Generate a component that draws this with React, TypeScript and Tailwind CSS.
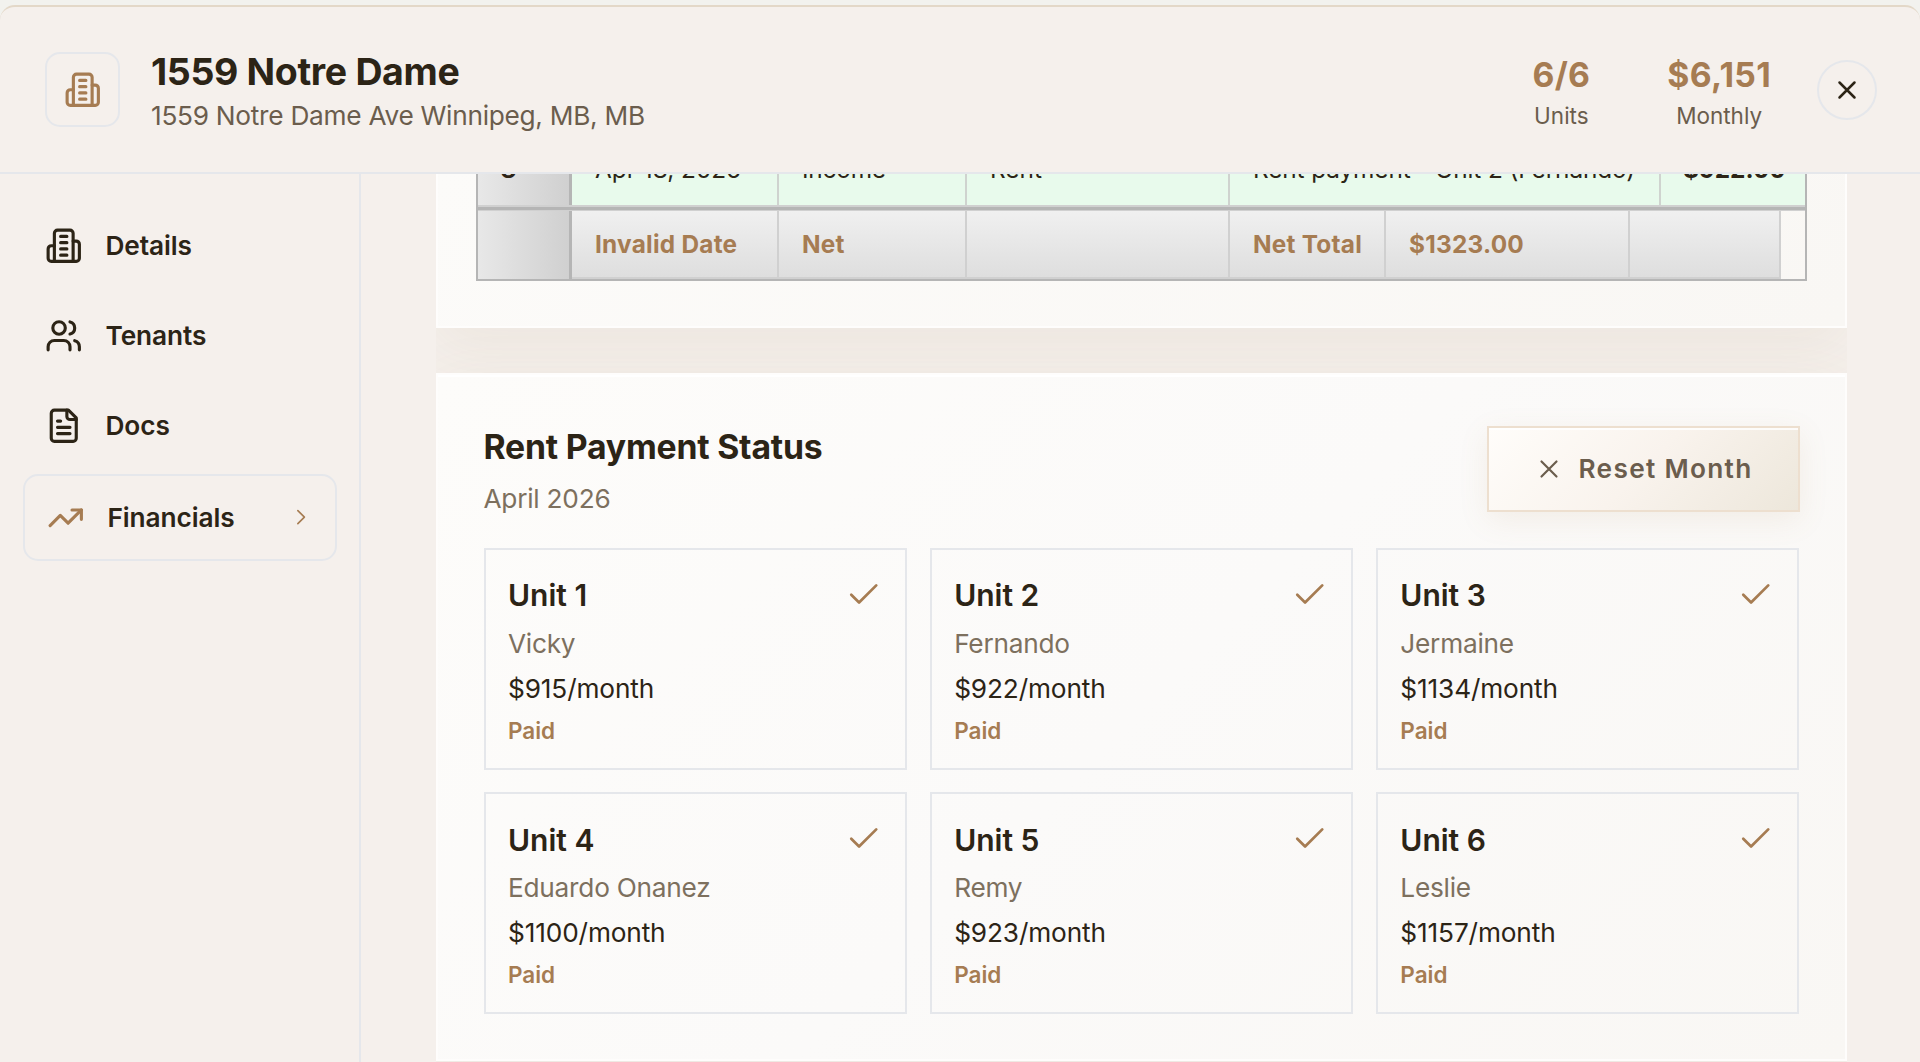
import type { ReactNode } from "react";

type IconProps = { size: string; stroke: number; children: ReactNode };

function Icon({ size, stroke, children }: IconProps) {
  return (
    <svg
      viewBox="0 0 24 24"
      fill="none"
      stroke="currentColor"
      strokeWidth={stroke}
      strokeLinecap="round"
      strokeLinejoin="round"
      className={`shrink-0 ${size}`}
    >
      {children}
    </svg>
  );
}

const building = (
  <>
    <path d="M6 22V4a2 2 0 0 1 2-2h8a2 2 0 0 1 2 2v18Z" />
    <path d="M6 12H4a2 2 0 0 0-2 2v6a2 2 0 0 0 2 2h2" />
    <path d="M18 9h2a2 2 0 0 1 2 2v9a2 2 0 0 1-2 2h-2" />
    <path d="M10 6h4M10 10h4M10 14h4M10 18h4" />
  </>
);
const users = (
  <>
    <path d="M16 21v-2a4 4 0 0 0-4-4H6a4 4 0 0 0-4 4v2" />
    <circle cx="9" cy="7" r="4" />
    <path d="M22 21v-2a4 4 0 0 0-3-3.87" />
    <path d="M16 3.13a4 4 0 0 1 0 7.75" />
  </>
);
const file = (
  <>
    <path d="M15 2H6a2 2 0 0 0-2 2v16a2 2 0 0 0 2 2h12a2 2 0 0 0 2-2V7Z" />
    <path d="M14 2v4a2 2 0 0 0 2 2h4" />
    <path d="M10 9H8M16 13H8M16 17H8" />
  </>
);
const trend = (
  <>
    <path d="M22 7 13.5 15.5 8.5 10.5 2 17" />
    <path d="M16 7h6v6" />
  </>
);
const cross = <path d="M18 6 6 18M6 6l12 12" />;
const check = <path d="M20 6 9 17l-5-5" />;
const chevron = <path d="m9 18 6-6-6-6" />;

function Header() {
  return (
    <header className="flex h-[169px] shrink-0 items-center rounded-t-[15px] border-t-2 border-b-2 border-t-[#e3d8c8] border-b-[#e5e7eb] bg-[#f5f0ec] pr-[43px] pl-[45px]">
      <div className="flex size-[75px] items-center justify-center rounded-[15px] border-2 border-[#e5e7eb] text-[#a67c52]">
        <Icon size="size-[37.5px]" stroke={2}>{building}</Icon>
      </div>
      <div className="ml-[31px] flex-1 pt-[5px]">
        <h1 className="text-[37.5px] leading-[47px] font-bold tracking-[-0.35px]">1559 Notre Dame</h1>
        <p className="text-[26.25px] leading-[41px] tracking-[-0.28px] text-[#6b5d4d]">1559 Notre Dame Ave Winnipeg, MB, MB</p>
      </div>
      <div className="flex gap-[77px] pt-px text-center">
        <Stat value="6/6" label="Units" />
        <Stat value="$6,151" label="Monthly" />
      </div>
      <button className="ml-[46px] flex size-[60px] items-center justify-center rounded-full border-2 border-[#e5e7eb]">
        <Icon size="size-[30px]" stroke={2}>{cross}</Icon>
      </button>
    </header>
  );
}

function Stat({ value, label }: { value: string; label: string }) {
  return (
    <div>
      <div className="text-[33.75px] leading-[52.5px] font-bold tracking-[0.3px] text-[#a67c52]">{value}</div>
      <div className="text-[22.5px] leading-[30px] text-[#6b5d4d]">{label}</div>
    </div>
  );
}

const navItems = [
  { label: "Details", icon: building },
  { label: "Tenants", icon: users },
  { label: "Docs", icon: file },
];

function Sidebar() {
  return (
    <nav className="flex w-[361px] shrink-0 flex-col gap-[7.5px] border-r-2 border-[#e5e7eb] px-[22.5px] pt-[30px] text-[26.25px] font-semibold tracking-[-0.1px]">
      {navItems.map((item) => (
        <div key={item.label} className="flex h-[82.5px] items-center gap-[23px] px-[22.5px]">
          <Icon size="size-[37.5px]" stroke={2}>{item.icon}</Icon>
          <span>{item.label}</span>
        </div>
      ))}
      <div className="flex h-[86.5px] items-center gap-[23px] rounded-[15px] border-2 border-[#e5e7eb] pr-[20.5px] pl-[22.5px]">
        <Icon size="size-[37.5px] text-[#a67c52]" stroke={2}>{trend}</Icon>
        <span className="flex-1">Financials</span>
        <Icon size="size-[26.25px] text-[#a67c52]" stroke={1.5}>{chevron}</Icon>
      </div>
    </nav>
  );
}

const entryCell = "shrink-0 border-r-2 border-[#cfd3cf] pl-[23px] whitespace-nowrap";
const netCell = "flex shrink-0 items-center border-r-2 border-[#d0d0d0] pl-[23px] whitespace-nowrap";

function Ledger() {
  return (
    <div className="mx-[40px] w-[1331px] border-x-2 border-b-2 border-[#b5b5b5] text-[24.375px]">
      <div className="flex h-[31px] overflow-hidden bg-[#e8faec] leading-[30px]">
        <div className="w-[94px] shrink-0 border-r-3 border-[#b5b5b5] bg-linear-to-r from-[#e8e8e8] to-[#d0d0d0]">
          <div className="-mt-[20px] pr-[30px] text-center font-bold">8</div>
        </div>
        <div className={`w-[207px] ${entryCell}`}><div className="-mt-[20px]">Apr 18, 2026</div></div>
        <div className={`w-[188px] ${entryCell}`}><div className="-mt-[20px] tracking-[-0.2px]">Income</div></div>
        <div className={`w-[263px] ${entryCell}`}><div className="-mt-[20px]">Rent</div></div>
        <div className={`w-[431px] ${entryCell}`}><div className="-mt-[20px] tracking-[-0.1px]">Rent payment - Unit 2 (Fernando)</div></div>
        <div className="flex-1 pl-[22px]"><div className="-mt-[20px] font-bold">$922.00</div></div>
      </div>
      <div className="h-[6px] border-t-2 border-b border-[#d0d0d0] bg-[#b5b5b5]" />
      <div className="flex h-[68px] font-bold tracking-[0.25px] text-[#a67c52]">
        <div className="w-[94px] shrink-0 border-r-3 border-[#b5b5b5] bg-linear-to-r from-[#e8e8e8] to-[#d0d0d0]" />
        <div className="flex w-[1209px] border-b-2 border-[#d0d0d0] bg-linear-to-b from-[#f0f0f0] to-[#dedede]">
          <div className={`w-[207px] ${netCell}`}>Invalid Date</div>
          <div className={`w-[188px] ${netCell}`}>Net</div>
          <div className={`w-[263px] ${netCell}`} />
          <div className={`w-[156px] ${netCell}`}>Net Total</div>
          <div className={`w-[244px] ${netCell}`}>$1323.00</div>
          <div className={`w-[151px] ${netCell}`} />
        </div>
      </div>
    </div>
  );
}

const units = [
  { name: "Unit 1", tenant: "Vicky", rent: "$915/month" },
  { name: "Unit 2", tenant: "Fernando", rent: "$922/month" },
  { name: "Unit 3", tenant: "Jermaine", rent: "$1134/month" },
  { name: "Unit 4", tenant: "Eduardo Onanez", rent: "$1100/month" },
  { name: "Unit 5", tenant: "Remy", rent: "$923/month" },
  { name: "Unit 6", tenant: "Leslie", rent: "$1157/month" },
];

function RentStatus() {
  return (
    <section className="mt-[45px] h-[688px] border-2 border-[#fefdfc] bg-linear-135 from-[#fdfcfa] via-[#fbfaf9] to-[#f9f7f4] px-[45.5px] pt-[45px] shadow-[0_15px_60px_rgba(139,110,60,0.08),inset_0_2px_0_#fff]">
      <div className="mb-[30px] flex items-center justify-between">
        <div>
          <h2 className="pt-px text-[33.75px] leading-[51.5px] font-bold tracking-[-0.2px]">Rent Payment Status</h2>
          <p className="mt-[7.5px] pt-px text-[26.25px] leading-[36.5px] tracking-[-0.25px] text-[#7d705e]">April 2026</p>
        </div>
        <button className="flex h-[86.5px] w-[313px] items-center gap-[15px] border-2 border-[#eddfcf] bg-linear-135 from-[#fffdfa] via-[#f9f3ed] to-[#ede7db] pl-[45px] text-[26.25px] font-semibold tracking-[1.3px] whitespace-nowrap text-[#6b5d4d] shadow-[0_8px_30px_rgba(166,124,82,0.1),inset_0_2px_0_rgba(255,255,255,0.8)]">
          <Icon size="size-[30px]" stroke={1.75}>{cross}</Icon>
          Reset Month
        </button>
      </div>
      <div className="grid grid-cols-3 gap-x-[22.5px] gap-y-[22.5px]">
        {units.map((unit) => (
          <div key={unit.name} className="flex h-[222px] flex-col gap-[7.5px] border-2 border-[#e5e7eb] p-[22.5px]">
            <div className="flex h-[45px] shrink-0 items-center justify-between">
              <span className="pt-[2px] text-[30px] font-semibold">{unit.name}</span>
              <Icon size="size-[37.5px] text-[#a67c52]" stroke={1.75}>{check}</Icon>
            </div>
            <div className="pt-px text-[26.25px] leading-[36.5px] tracking-[-0.25px] text-[#7d705e]">{unit.tenant}</div>
            <div className="pt-px text-[26.25px] leading-[36.5px] tracking-[-0.15px]">{unit.rent}</div>
            <div className="pt-px text-[22.5px] leading-[30px] font-semibold text-[#a67c52]">Paid</div>
          </div>
        ))}
      </div>
    </section>
  );
}

export default function App() {
  return (
    <div className="flex h-[1062px] w-[1920px] flex-col overflow-hidden bg-[#f2f2ee] pt-[5px] font-['Inter',sans-serif] text-[#2c2416]">
      <Header />
      <div className="flex min-h-0 flex-1 bg-[#f5f0ec]">
        <Sidebar />
        <main className="ml-[75px] w-[1411px] overflow-hidden">
          <section className="h-[154px] border-x-2 border-b-2 border-[#fefdfc] bg-linear-135 from-[#fcfbf9] to-[#f9f7f4] shadow-[0_15px_60px_rgba(139,110,60,0.08)]">
            <div className="-ml-[2px]"><Ledger /></div>
          </section>
          <RentStatus />
        </main>
      </div>
    </div>
  );
}
